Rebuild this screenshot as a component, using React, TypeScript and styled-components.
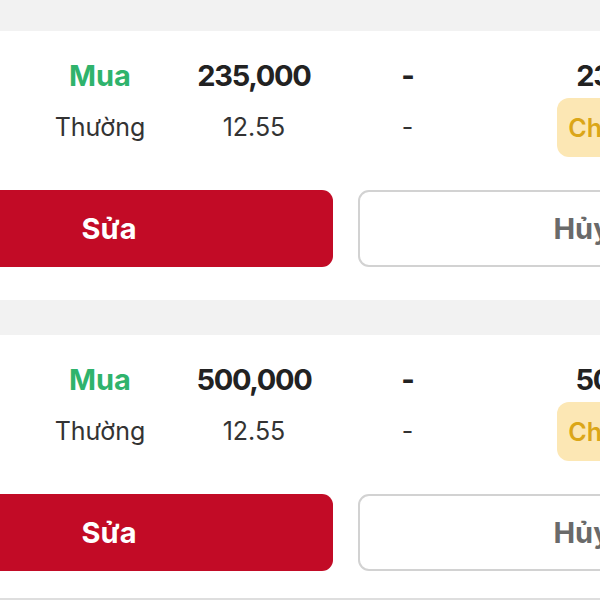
import React from "react"
import styled, { createGlobalStyle } from "styled-components"

const GlobalStyle = createGlobalStyle`
  html, body {
    margin: 0;
    padding: 0;
    background: #f2f2f2;
    overflow: hidden;
  }
  body {
    font-family: Inter, "Noto Sans", "Liberation Sans", sans-serif;
  }
`

const Page = styled.div`
  width: 600px;
  height: 600px;
  overflow: hidden;
  background: #f2f2f2;
  padding-top: 31px;
  box-sizing: border-box;
`

const List = styled.div`
  display: flex;
  flex-direction: column;
  gap: 35px;
  margin-left: -140px;
  width: 971px;
`

const Card = styled.div<{ $last?: boolean }>`
  background: #fff;
  padding: 24px 25px ${p => (p.$last ? "27px" : "33px")};
  border-bottom: ${p => (p.$last ? "2px solid #dedede" : "none")};
  display: flex;
  flex-direction: column;
`

const InfoGrid = styled.div`
  display: grid;
  grid-template-columns: 138px 154px 154px 153px 292px 30px;
  grid-template-rows: 40px 59px;
  row-gap: 3px;
  align-items: center;
  justify-items: center;
`

const Cell = styled.div<{ $tone?: "buy" | "strong" | "plain"; $shift?: number }>`
  font-size: ${p => (p.$tone === "plain" ? "25px" : "29px")};
  font-weight: ${p => (p.$tone === "plain" ? 400 : 700)};
  letter-spacing: ${p => (p.$tone === "strong" ? "-1.3px" : "0")};
  color: ${p =>
    p.$tone === "buy" ? "#2fb36c" : p.$tone === "strong" ? "#222" : "#333"};
  margin-left: ${p => p.$shift || 0}px;
  white-space: nowrap;
  line-height: 1;
`

const Badge = styled.div`
  height: 59px;
  display: flex;
  align-items: center;
  padding: 0 11px;
  margin-right: 8px;
  border-radius: 12px;
  background: #fce7b4;
  color: #dba618;
  font-size: 25px;
  font-weight: 600;
  white-space: nowrap;
`

const Actions = styled.div`
  margin-top: 33px;
  display: grid;
  grid-template-columns: 448px 448px;
  gap: 25px;
`

const Button = styled.button<{ $primary?: boolean }>`
  height: 77px;
  border-radius: 11px;
  box-sizing: border-box;
  font-family: inherit;
  font-size: 29px;
  font-weight: 700;
  border: ${p => (p.$primary ? "none" : "2px solid #d2d2d2")};
  background: ${p => (p.$primary ? "#c20b26" : "#fff")};
  color: ${p => (p.$primary ? "#fff" : "#6a6a6a")};
  display: flex;
  align-items: center;
  justify-content: center;
`

type Order = { qty: string; price: string }

const orders: Order[] = [
  { qty: "235,000", price: "12.55" },
  { qty: "500,000", price: "12.55" },
]

const OrderCard = ({ order, last }: { order: Order; last?: boolean }) => (
  <Card $last={last}>
    <InfoGrid>
      <span />
      <Cell $tone="buy">Mua</Cell>
      <Cell $tone="strong">{order.qty}</Cell>
      <Cell $tone="strong">-</Cell>
      <Cell $tone="strong" $shift={6}>{order.qty}</Cell>
      <span />
      <span />
      <Cell $tone="plain">Thường</Cell>
      <Cell $tone="plain">{order.price}</Cell>
      <Cell $tone="plain">-</Cell>
      <Badge>Chờ khớp</Badge>
      <span />
    </InfoGrid>
    <Actions>
      <Button $primary>Sửa</Button>
      <Button>Hủy</Button>
    </Actions>
  </Card>
)

export default function App() {
  return (
    <Page>
      <GlobalStyle />
      <List>
        {orders.map((o, i) => (
          <OrderCard key={i} order={o} last={i === orders.length - 1} />
        ))}
      </List>
    </Page>
  )
}
